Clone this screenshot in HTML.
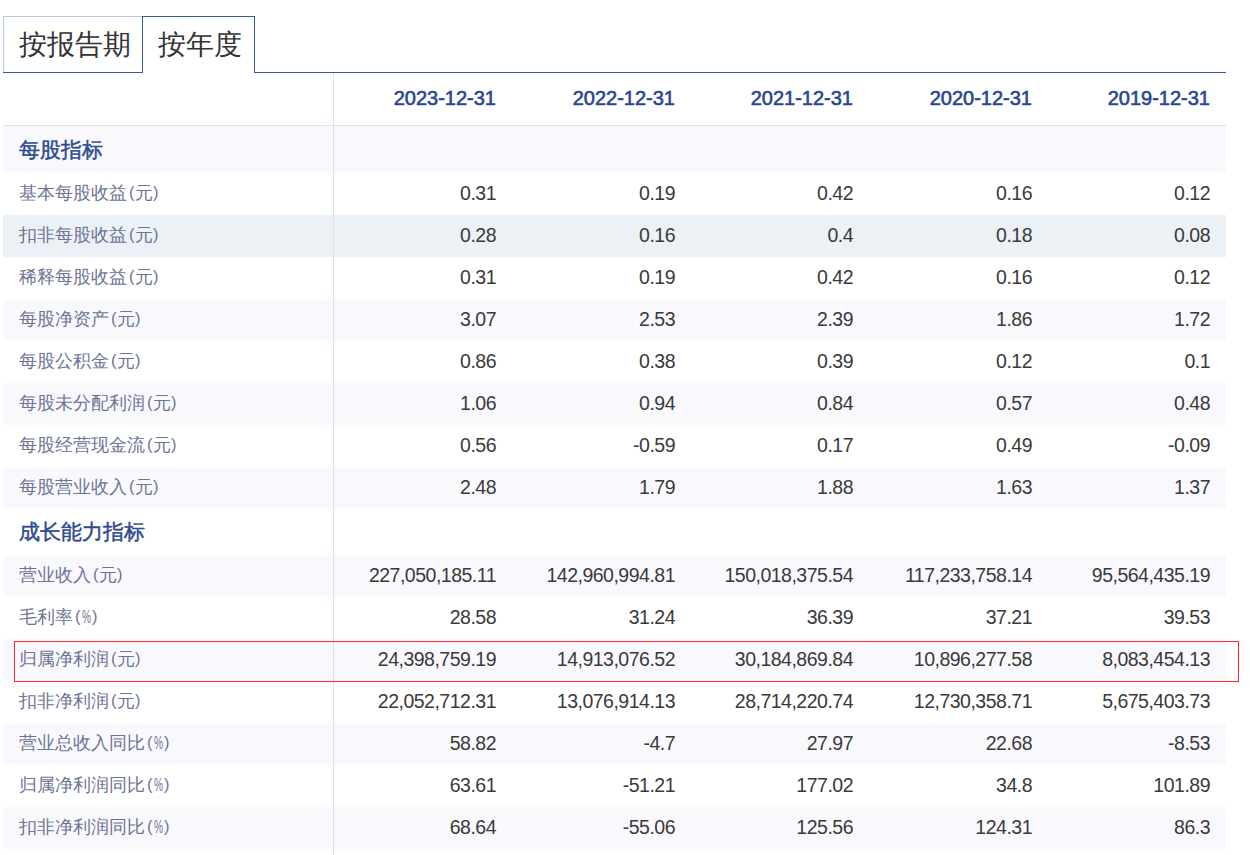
<!DOCTYPE html><html><head><meta charset="utf-8"><style>
*{margin:0;padding:0;box-sizing:border-box}
html,body{width:1250px;height:855px;overflow:hidden;background:#fff;font-family:"Liberation Sans",sans-serif}
.a{position:absolute}
.tab{position:absolute;top:16px;height:56px;font-size:27.5px;line-height:55px;text-indent:2px;color:#333;text-align:center}
.t1{left:3px;width:140px;border:1px solid #b7cbe6;border-right:none;border-bottom:none}
.t2{left:142px;width:113px;border:1px solid #3a5897;border-bottom:none;background:#fff}
.bl{position:absolute;height:1px;background:#3a5897;top:72px}
.rw{position:absolute;left:3px;width:1223px}
.lt{background:#f9f9fd}
.hv{background:#ecf1f6}
.lab{position:absolute;left:16px;top:-1px;height:100%;display:flex;align-items:center;font-size:18px;color:#6d7496;white-space:nowrap}
.p1{margin-left:2px;font-size:16.5px;position:relative;top:-1px}
.p2{font-size:16.5px;position:relative;top:-1px;margin-left:0.5px}
.pc{display:inline-block;width:16px;margin-right:-6px;transform:scaleX(0.56);transform-origin:0 50%;margin-left:1px}
.sec .lab{font-size:21px;top:0;color:#2d4a8e;-webkit-text-stroke:0.45px #2d4a8e}
.num{position:absolute;top:-1px;height:100%;display:flex;align-items:center;justify-content:flex-end;font-size:19.5px;color:#3a3a3a;white-space:nowrap;letter-spacing:-0.5px}
.dt{position:absolute;top:72px;height:52px;display:flex;align-items:center;justify-content:flex-end;font-size:20px;color:#2a4692;-webkit-text-stroke:0.6px #2a4692;white-space:nowrap}
</style></head><body>
<div class="tab t1">按报告期</div>
<div class="tab t2">按年度</div>
<div class="bl" style="left:3px;width:140px"></div>
<div class="bl" style="left:254px;width:972px"></div>
<div class="a" style="left:3px;top:125px;width:1223px;height:1px;background:#d4e3f3"></div>
<div class="dt" style="left:326px;width:170px">2023-12-31</div>
<div class="dt" style="left:505px;width:170px">2022-12-31</div>
<div class="dt" style="left:683px;width:170px">2021-12-31</div>
<div class="dt" style="left:862px;width:170px">2020-12-31</div>
<div class="dt" style="left:1040px;width:170px">2019-12-31</div>
<div class="rw lt sec" style="top:126px;height:47px"><div class="lab">每股指标</div></div>
<div class="rw" style="top:173px;height:42px"><div class="lab">基本每股收益<span class=p1>(</span>元<span class=p2>)</span></div><div class="num" style="left:323px;width:170px">0.31</div><div class="num" style="left:502px;width:170px">0.19</div><div class="num" style="left:680px;width:170px">0.42</div><div class="num" style="left:859px;width:170px">0.16</div><div class="num" style="left:1037px;width:170px">0.12</div></div>
<div class="rw hv" style="top:215px;height:42px"><div class="lab">扣非每股收益<span class=p1>(</span>元<span class=p2>)</span></div><div class="num" style="left:323px;width:170px">0.28</div><div class="num" style="left:502px;width:170px">0.16</div><div class="num" style="left:680px;width:170px">0.4</div><div class="num" style="left:859px;width:170px">0.18</div><div class="num" style="left:1037px;width:170px">0.08</div></div>
<div class="rw" style="top:257px;height:42px"><div class="lab">稀释每股收益<span class=p1>(</span>元<span class=p2>)</span></div><div class="num" style="left:323px;width:170px">0.31</div><div class="num" style="left:502px;width:170px">0.19</div><div class="num" style="left:680px;width:170px">0.42</div><div class="num" style="left:859px;width:170px">0.16</div><div class="num" style="left:1037px;width:170px">0.12</div></div>
<div class="rw lt" style="top:299px;height:42px"><div class="lab">每股净资产<span class=p1>(</span>元<span class=p2>)</span></div><div class="num" style="left:323px;width:170px">3.07</div><div class="num" style="left:502px;width:170px">2.53</div><div class="num" style="left:680px;width:170px">2.39</div><div class="num" style="left:859px;width:170px">1.86</div><div class="num" style="left:1037px;width:170px">1.72</div></div>
<div class="rw" style="top:341px;height:42px"><div class="lab">每股公积金<span class=p1>(</span>元<span class=p2>)</span></div><div class="num" style="left:323px;width:170px">0.86</div><div class="num" style="left:502px;width:170px">0.38</div><div class="num" style="left:680px;width:170px">0.39</div><div class="num" style="left:859px;width:170px">0.12</div><div class="num" style="left:1037px;width:170px">0.1</div></div>
<div class="rw lt" style="top:383px;height:42px"><div class="lab">每股未分配利润<span class=p1>(</span>元<span class=p2>)</span></div><div class="num" style="left:323px;width:170px">1.06</div><div class="num" style="left:502px;width:170px">0.94</div><div class="num" style="left:680px;width:170px">0.84</div><div class="num" style="left:859px;width:170px">0.57</div><div class="num" style="left:1037px;width:170px">0.48</div></div>
<div class="rw" style="top:425px;height:42px"><div class="lab">每股经营现金流<span class=p1>(</span>元<span class=p2>)</span></div><div class="num" style="left:323px;width:170px">0.56</div><div class="num" style="left:502px;width:170px">-0.59</div><div class="num" style="left:680px;width:170px">0.17</div><div class="num" style="left:859px;width:170px">0.49</div><div class="num" style="left:1037px;width:170px">-0.09</div></div>
<div class="rw lt" style="top:467px;height:42px"><div class="lab">每股营业收入<span class=p1>(</span>元<span class=p2>)</span></div><div class="num" style="left:323px;width:170px">2.48</div><div class="num" style="left:502px;width:170px">1.79</div><div class="num" style="left:680px;width:170px">1.88</div><div class="num" style="left:859px;width:170px">1.63</div><div class="num" style="left:1037px;width:170px">1.37</div></div>
<div class="rw sec" style="top:509px;height:46px"><div class="lab">成长能力指标</div></div>
<div class="rw lt" style="top:555px;height:42px"><div class="lab">营业收入<span class=p1>(</span>元<span class=p2>)</span></div><div class="num" style="left:323px;width:170px">227,050,185.11</div><div class="num" style="left:502px;width:170px">142,960,994.81</div><div class="num" style="left:680px;width:170px">150,018,375.54</div><div class="num" style="left:859px;width:170px">117,233,758.14</div><div class="num" style="left:1037px;width:170px">95,564,435.19</div></div>
<div class="rw" style="top:597px;height:42px"><div class="lab">毛利率<span class=p1>(</span><span class=pc>%</span><span class=p2>)</span></div><div class="num" style="left:323px;width:170px">28.58</div><div class="num" style="left:502px;width:170px">31.24</div><div class="num" style="left:680px;width:170px">36.39</div><div class="num" style="left:859px;width:170px">37.21</div><div class="num" style="left:1037px;width:170px">39.53</div></div>
<div class="rw lt" style="top:639px;height:42px"><div class="lab">归属净利润<span class=p1>(</span>元<span class=p2>)</span></div><div class="num" style="left:323px;width:170px">24,398,759.19</div><div class="num" style="left:502px;width:170px">14,913,076.52</div><div class="num" style="left:680px;width:170px">30,184,869.84</div><div class="num" style="left:859px;width:170px">10,896,277.58</div><div class="num" style="left:1037px;width:170px">8,083,454.13</div></div>
<div class="rw" style="top:681px;height:42px"><div class="lab">扣非净利润<span class=p1>(</span>元<span class=p2>)</span></div><div class="num" style="left:323px;width:170px">22,052,712.31</div><div class="num" style="left:502px;width:170px">13,076,914.13</div><div class="num" style="left:680px;width:170px">28,714,220.74</div><div class="num" style="left:859px;width:170px">12,730,358.71</div><div class="num" style="left:1037px;width:170px">5,675,403.73</div></div>
<div class="rw lt" style="top:723px;height:42px"><div class="lab">营业总收入同比<span class=p1>(</span><span class=pc>%</span><span class=p2>)</span></div><div class="num" style="left:323px;width:170px">58.82</div><div class="num" style="left:502px;width:170px">-4.7</div><div class="num" style="left:680px;width:170px">27.97</div><div class="num" style="left:859px;width:170px">22.68</div><div class="num" style="left:1037px;width:170px">-8.53</div></div>
<div class="rw" style="top:765px;height:42px"><div class="lab">归属净利润同比<span class=p1>(</span><span class=pc>%</span><span class=p2>)</span></div><div class="num" style="left:323px;width:170px">63.61</div><div class="num" style="left:502px;width:170px">-51.21</div><div class="num" style="left:680px;width:170px">177.02</div><div class="num" style="left:859px;width:170px">34.8</div><div class="num" style="left:1037px;width:170px">101.89</div></div>
<div class="rw lt" style="top:807px;height:42px"><div class="lab">扣非净利润同比<span class=p1>(</span><span class=pc>%</span><span class=p2>)</span></div><div class="num" style="left:323px;width:170px">68.64</div><div class="num" style="left:502px;width:170px">-55.06</div><div class="num" style="left:680px;width:170px">125.56</div><div class="num" style="left:859px;width:170px">124.31</div><div class="num" style="left:1037px;width:170px">86.3</div></div>
<div class="a" style="left:333px;top:73px;width:1px;height:782px;background:#d4e3f3"></div>
<div class="a" style="left:14px;top:641px;width:1225px;height:41px;border:1px solid #ff2a2a"></div>
</body></html>
